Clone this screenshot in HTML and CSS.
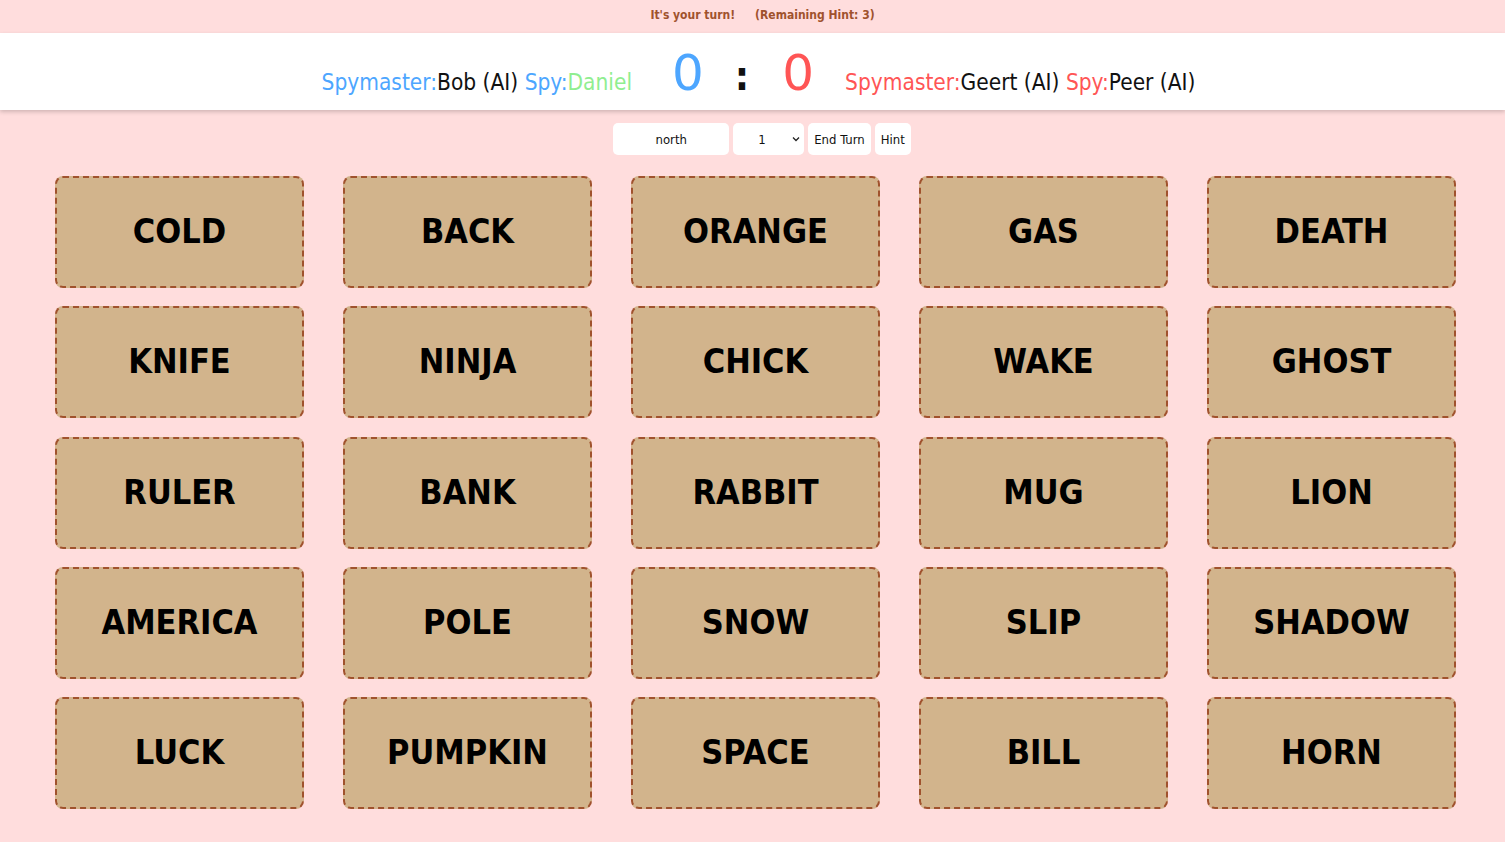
FILE: index.html
```html
<!DOCTYPE html>
<html>
<head>
<meta charset="utf-8">
<link rel="stylesheet" href="styles.css">
</head>
<body>
<div class="status">
  <span>It's your turn!</span>
  <span class="hint-left">(Remaining Hint: 3)</span>
</div>
<header class="scoreboard">
  <div class="score-row">
    <div class="team">
      <span class="blue">Spymaster:</span><span>Bob (AI)</span>
      <span class="blue">Spy:</span><span class="green">Daniel</span>
    </div>
    <div class="score">
      <span class="num blue">0</span>
      <span class="colon">:</span>
      <span class="num red">0</span>
    </div>
    <div class="team">
      <span class="red">Spymaster:</span><span>Geert (AI)</span>
      <span class="red">Spy:</span><span>Peer (AI)</span>
    </div>
  </div>
</header>
<div class="controls">
  <input class="clue" type="text" value="north">
  <div class="select"><span>1</span><svg width="8" height="6" viewBox="0 0 8 6"><path d="M1 1.5 L4 4.5 L7 1.5" fill="none" stroke="#222" stroke-width="1.3"/></svg></div>
  <button class="btn">End Turn</button>
  <button class="btn">Hint</button>
</div>
<main class="board">
  <div class="card">COLD</div>
  <div class="card">BACK</div>
  <div class="card">ORANGE</div>
  <div class="card">GAS</div>
  <div class="card">DEATH</div>
  <div class="card">KNIFE</div>
  <div class="card">NINJA</div>
  <div class="card">CHICK</div>
  <div class="card">WAKE</div>
  <div class="card">GHOST</div>
  <div class="card">RULER</div>
  <div class="card">BANK</div>
  <div class="card">RABBIT</div>
  <div class="card">MUG</div>
  <div class="card">LION</div>
  <div class="card">AMERICA</div>
  <div class="card">POLE</div>
  <div class="card">SNOW</div>
  <div class="card">SLIP</div>
  <div class="card">SHADOW</div>
  <div class="card">LUCK</div>
  <div class="card">PUMPKIN</div>
  <div class="card">SPACE</div>
  <div class="card">BILL</div>
  <div class="card">HORN</div>
</main>
</body>
</html>
```

FILE: styles.css
```css
html, body {
  margin: 0;
  padding: 0;
}
body {
  background: #ffdddd;
  font-family: "DejaVu Sans Condensed", "DejaVu Sans", sans-serif;
  width: 1505px;
  height: 842px;
  overflow: hidden;
}
.status {
  height: 33px;
  display: flex;
  justify-content: center;
  align-items: center;
  padding-left: 20px;
  padding-bottom: 3px;
  font-size: 12px;
  font-weight: bold;
  color: #a0522d;
  box-sizing: border-box;
}
.hint-left {
  margin-left: 20px;
}
.scoreboard {
  background: #ffffff;
  height: 77px;
  box-shadow: 0 2px 4px rgba(0, 0, 0, 0.18);
  display: flex;
  justify-content: center;
  align-items: flex-end;
  padding-bottom: 12px;
  padding-left: 12px;
  box-sizing: border-box;
  color: #111;
  font-size: 22.5px;
  position: relative;
}
.score-row {
  display: flex;
  align-items: baseline;
}
.blue { color: #4da6ff; }
.green { color: #90ee90; }
.red { color: #ff5555; }
.score {
  display: flex;
  align-items: baseline;
  margin: 0 31px 0 40px;
}
.num {
  font-family: "DejaVu Sans", sans-serif;
  font-size: 50px;
  line-height: 1;
}
.colon {
  font-size: 40px;
  font-weight: bold;
  margin: 0 33px 0 31px;
  line-height: 1;
}
.controls {
  display: flex;
  justify-content: center;
  gap: 4px;
  margin-top: 13px;
  padding-left: 19px;
  height: 32px;
}
.clue, .select, .btn {
  background: #fff;
  border: none;
  border-radius: 5px;
  height: 32px;
  box-sizing: border-box;
  font-family: "DejaVu Sans Condensed", "DejaVu Sans", sans-serif;
  font-size: 13px;
  color: #111;
  padding: 0;
  margin: 0;
}
.clue {
  width: 116px;
  text-align: center;
  outline: none;
}
.select {
  width: 71px;
  display: flex;
  align-items: center;
  justify-content: space-between;
  padding: 0 4px 0 25px;
}
.btn {
  padding: 0 6px;
}
.board {
  display: grid;
  grid-template-columns: repeat(5, 249px);
  grid-auto-rows: 112px;
  column-gap: 39px;
  row-gap: 18.3px;
  padding: 0 49px 0 55px;
  margin-top: 21px;
}
.card {
  background: #d2b48c;
  border: 2px dashed #a0522d;
  border-radius: 8px;
  display: flex;
  align-items: center;
  justify-content: center;
  font-size: 34px;
  font-weight: bold;
  color: #000;
  padding-bottom: 2px;
  box-sizing: border-box;
}
```
